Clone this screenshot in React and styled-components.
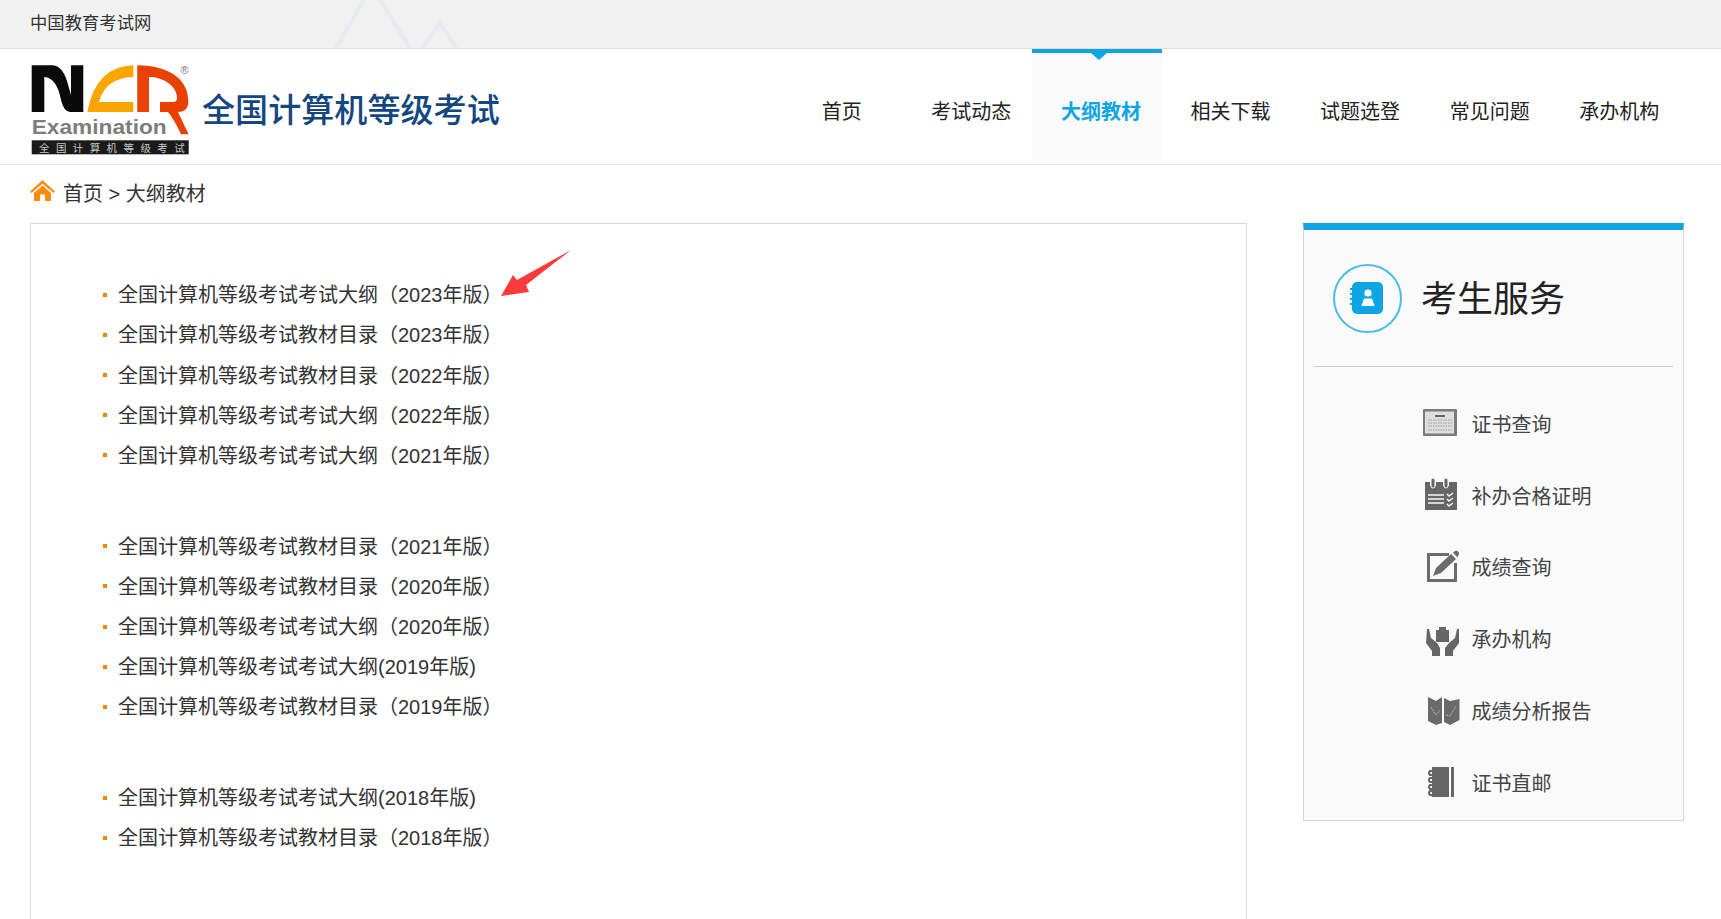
import React from 'react';
import styled, { createGlobalStyle } from 'styled-components';

const GlobalStyle = createGlobalStyle`
    html, body {
        margin: 0;
        height: 100%;
        overflow: hidden;
        background: #fff;
    }
    body {
        font-family: "Liberation Sans", "Noto Sans CJK SC", sans-serif;
        color: #333;
    }
`;

const Page = styled.div`
    height: 919px;
    overflow: hidden;
`;

const TopBar = styled.div`
    position: relative;
    height: 48px;
    box-sizing: content-box;
    padding-left: 30px;
    background: #f1f1f1;
    border-bottom: 1px solid #dedede;
    font-size: 17.33px;
    line-height: 46px;
    color: #333;
`;

const Mountains = styled.svg`
    position: absolute;
    left: 320px;
    top: 0;
`;

const Header = styled.header`
    display: flex;
    justify-content: space-between;
    height: 115px;
    padding: 0 37px 0 30px;
    border-bottom: 1px solid #e5e5e5;
`;

const Brand = styled.div`
    display: flex;
    align-items: center;
    height: 100%;
`;

const LogoMark = styled.svg`
    flex: none;
    margin-top: 7px;
`;

const BrandTitle = styled.span`
    margin: 5px 0 0 12px;
    font-size: 33.1px;
    font-weight: 500;
    line-height: 1;
    color: #14477f;
    font-family: "Noto Sans CJK SC", sans-serif;
`;

const Nav = styled.nav`
    display: flex;
    width: 907px;
`;

const NavItem = styled.a`
    position: relative;
    isolation: isolate;
    flex: 1;
    text-align: center;
    font-size: 20px;
    line-height: 126px;
    font-weight: ${(p) => (p.$active ? 700 : 400)};
    color: ${(p) => (p.$active ? '#0ea5e4' : '#222')};

    ${(p) => p.$active && `
        &::before {
            content: "";
            position: absolute;
            z-index: -1;
            left: -4px;
            right: 4px;
            top: 0;
            bottom: 4px;
            background: #fafafa;
            border-top: 4px solid #0ea5e4;
        }
        &::after {
            content: "";
            position: absolute;
            left: 55px;
            top: 4px;
            border-style: solid;
            border-width: 7px 8px 0 8px;
            border-color: #0ea5e4 transparent transparent transparent;
        }
    `}
`;

const Crumbs = styled.div`
    display: flex;
    align-items: center;
    height: 54px;
    padding: 0 0 4px 30px;
    font-size: 20px;
    color: #333;
`;

const HomeIcon = styled.svg`
    flex: none;
    margin: -4px 8px 0 0;
`;

const Content = styled.div`
    display: grid;
    grid-template-columns: 1217px 381px;
    justify-content: space-between;
    align-items: start;
    padding: 0 37px 0 30px;
`;

const Panel = styled.div`
    position: relative;
    height: 800px;
    box-sizing: border-box;
    padding: 49.6px 0 0 72px;
    border: 1px solid #d9d9d9;
`;

const ArrowMark = styled.svg`
    position: absolute;
    left: 467px;
    top: 24px;
`;

const Group = styled.ul`
    list-style: none;
    margin: 0 0 50.6px;
    padding: 0;
`;

const Row = styled.li`
    display: flex;
    align-items: center;
    height: 40.2px;
    font-size: 20px;
    color: #333;

    &::before {
        content: "";
        width: 4px;
        height: 4px;
        margin: 2px 11px 0 0;
        background: #ff7f00;
    }
`;

const Side = styled.aside`
    box-sizing: border-box;
    height: 598px;
    background: #fafafa;
    border: 1px solid #d5d5d5;
    border-top: 7px solid #0ea5e4;
`;

const SideHead = styled.div`
    display: flex;
    align-items: center;
    height: 136px;
    margin: 0 10px;
    padding-left: 19px;
    border-bottom: 1px solid #cfcfcf;
`;

const Badge = styled.div`
    display: flex;
    align-items: center;
    justify-content: center;
    width: 69px;
    height: 69px;
    padding-right: 2px;
    box-sizing: border-box;
    border: 2px solid #4dbcea;
    border-radius: 50%;
`;

const SideTitle = styled.h2`
    margin: -4px 0 0 19px;
    font-size: 36px;
    font-weight: 400;
    color: #222;
`;

const Services = styled.div`
    padding-top: 20.5px;
`;

const Service = styled.a`
    display: flex;
    align-items: center;
    height: 71.8px;
    padding-left: 118px;
    font-size: 20px;
    color: #444;
`;

const ServiceIcon = styled.svg`
    flex: none;
    margin: -1px 12px 0 0;
    filter: blur(0.3px);
`;

const Logo = () => (
    <LogoMark width="160" height="94" viewBox="0 0 160 94">
        <path fill="#0a0a0a" d="M1.7 2.3H22Q32 2.3 37 18L41 32V2.3H53.3V49H40Q34 49 31 37Q27 15 14.3 14V49H1.7Z" />
        <path fill="#fba600" d="M103.3 2.3Q66 3 57.3 49H103.3V39H69Q75 15 103.3 14Z" />
        <path fill="#e84100" d="M107.3 2.3C135 2.3 158.3 14 158.3 38Q158.3 49 148 49L158.5 71.3H151Q144 56 138 49H130V39H143Q147 39 147 35C147 22 132 14 119 14V49H107.3Z" />
        <text x="154.5" y="10.5" fontSize="11" textAnchor="middle" fill="#777" fontFamily="Liberation Sans">®</text>
        <text x="1.7" y="71" fontSize="21" fontWeight="700" fill="#7d7d7d" textLength="135" lengthAdjust="spacingAndGlyphs" fontFamily="Liberation Sans">Examination</text>
        <rect x="1.7" y="77.3" width="157" height="14" fill="#1c1a18" />
        <text x="9" y="88.5" fontSize="10.5" fill="#c8c8c8" letterSpacing="6.4" fontFamily="Noto Sans CJK SC">全国计算机等级考试</text>
    </LogoMark>
);

const Arrow = () => (
    <ArrowMark width="76" height="50" viewBox="0 0 76 50">
        <path fill="#fb3a3c" d="M3 48 L15 27 L19 32 L73 2 L28 37 L31 44Z" />
    </ArrowMark>
);

const CertIcon = () => (
    <ServiceIcon width="37.5" height="36" viewBox="0 0 37.5 36">
        <rect x="1" y="4" width="34" height="27" rx="1" fill="#7b7b7b" />
        <rect x="3" y="6.5" width="29" height="22" fill="#dedede" />
        <rect x="13" y="10" width="10" height="2" fill="#666" />
        <path stroke="#999" strokeDasharray="1.5 1" d="M6 15H30M6 18H30M6 21H30M6 25H30" />
    </ServiceIcon>
);

const NoteIcon = () => (
    <ServiceIcon width="37.5" height="36" viewBox="0 0 37.5 36">
        <path fill="#666" d="M3 5H8V9H14V5H21V9H27V5H35V33H3Z" />
        <rect x="9" y="1" width="4" height="10" rx="2" fill="#666" stroke="#fafafa" />
        <rect x="22" y="1" width="4" height="10" rx="2" fill="#666" stroke="#fafafa" />
        <path stroke="#fafafa" strokeWidth="1.5" d="M6 18H22M6 22H22M6 26H22" />
        <path stroke="#fafafa" strokeWidth="1.5" fill="none" d="M25 17l2 2 4-3M25 22l2 2 4-3M25 27l2 2 4-3" />
    </ServiceIcon>
);

const EditIcon = () => (
    <ServiceIcon width="37.5" height="36" viewBox="0 0 37.5 36">
        <path fill="none" stroke="#6b6b6b" strokeWidth="3" d="M33.5 15V32.5H6.5V6.5H27" />
        <path fill="#6b6b6b" d="M11 28L14 20L29 6L34 11L19 25Z" />
        <path fill="#6b6b6b" d="M31 4.5L33 3Q35 2 36.5 4T36 8L35.5 9.5Z" />
    </ServiceIcon>
);

const HandsIcon = () => (
    <ServiceIcon width="37.5" height="36" viewBox="0 0 37.5 36">
        <path fill="#666" d="M14 10H17V7H24V10H27V22H14Z" />
        <path fill="#666" d="M5 9L7 9L9 18L15 23L18 28V36H10V31L4 23Z" />
        <path fill="#666" d="M37 9L35 9L33 18L27 23L23 28V36H31V31L37 23Z" />
    </ServiceIcon>
);

const MapIcon = () => (
    <ServiceIcon width="37.5" height="36" viewBox="0 0 37.5 36">
        <path fill="#6a6a6a" d="M6 5L14 9L20 5V31L14 33L6 29Z" />
        <path fill="#6a6a6a" d="M22 6L28 9L37.5 7V28L28 33L22 30Z" />
        <path fill="none" stroke="#b5b5b5" strokeWidth="1" strokeDasharray="2 1" d="M9 15L14 23L18 18M24 23L28 24L34 14" />
    </ServiceIcon>
);

const BookIcon = () => (
    <ServiceIcon width="37.5" height="36" viewBox="0 0 37.5 36">
        <path fill="#666" d="M10 3H27V33H10Z" />
        <rect x="29" y="3" width="3" height="30" fill="#666" />
        <path fill="none" stroke="#666" strokeWidth="2" d="M10 7H8Q6 9 8 11H12M10 14H8Q6 16 8 18H12M10 21H8Q6 23 8 25H12M10 27H8Q6 29 8 31H12" />
    </ServiceIcon>
);

const groups = [
    [
        '全国计算机等级考试考试大纲（2023年版）',
        '全国计算机等级考试教材目录（2023年版）',
        '全国计算机等级考试教材目录（2022年版）',
        '全国计算机等级考试考试大纲（2022年版）',
        '全国计算机等级考试考试大纲（2021年版）',
    ],
    [
        '全国计算机等级考试教材目录（2021年版）',
        '全国计算机等级考试教材目录（2020年版）',
        '全国计算机等级考试考试大纲（2020年版）',
        '全国计算机等级考试考试大纲(2019年版)',
        '全国计算机等级考试教材目录（2019年版）',
    ],
    [
        '全国计算机等级考试考试大纲(2018年版)',
        '全国计算机等级考试教材目录（2018年版）',
    ],
];

const navItems = ['首页', '考试动态', '大纲教材', '相关下载', '试题选登', '常见问题', '承办机构'];

const services = [
    ['证书查询', CertIcon],
    ['补办合格证明', NoteIcon],
    ['成绩查询', EditIcon],
    ['承办机构', HandsIcon],
    ['成绩分析报告', MapIcon],
    ['证书直邮', BookIcon],
];

export default function App() {
    return (
        <Page>
            <GlobalStyle />
            <TopBar>
                中国教育考试网
                <Mountains width="150" height="48" viewBox="0 0 150 48">
                    <path fill="none" stroke="#e8eaf1" strokeWidth="4" d="M16 48L44 0M60 0L90 48M102 48L120 23L136 48" />
                </Mountains>
            </TopBar>
            <Header>
                <Brand>
                    <Logo />
                    <BrandTitle>全国计算机等级考试</BrandTitle>
                </Brand>
                <Nav>
                    {navItems.map((item) => (
                        <NavItem key={item} $active={item === '大纲教材'}>{item}</NavItem>
                    ))}
                </Nav>
            </Header>
            <Crumbs>
                <HomeIcon width="25" height="21" viewBox="0 0 25 21">
                    <path fill="#ff8a10" d="M12.5 0L25 11.5L23.4 13L12.5 3.5L1.6 13L0 11.5Z" />
                    <path fill="#ff8a10" d="M12.5 5.5L21 13V21H15V14.5H10V21H4V13Z" />
                </HomeIcon>
                首页&nbsp;&gt;&nbsp;大纲教材
            </Crumbs>
            <Content>
                <Panel>
                    <Arrow />
                    {groups.map((rows, i) => (
                        <Group key={i}>
                            {rows.map((row, j) => <Row key={j}>{row}</Row>)}
                        </Group>
                    ))}
                </Panel>
                <Side>
                    <SideHead>
                        <Badge>
                            <svg width="34" height="34" viewBox="0 0 34 34">
                                <rect x="2" y="1" width="31" height="32" rx="5" fill="#0ea5e4" />
                                <path stroke="#0ea5e4" strokeWidth="2" strokeLinecap="round" d="M0.5 8H3M0.5 13H3M0.5 18H3M0.5 23H3" />
                                <circle cx="18" cy="12" r="3.6" fill="#fff" />
                                <path fill="#fff" d="M11.5 25L14 17.5H22L24.5 25Z" />
                            </svg>
                        </Badge>
                        <SideTitle>考生服务</SideTitle>
                    </SideHead>
                    <Services>
                        {services.map(([label, Icon]) => (
                            <Service key={label}>
                                <Icon />
                                {label}
                            </Service>
                        ))}
                    </Services>
                </Side>
            </Content>
        </Page>
    );
}
